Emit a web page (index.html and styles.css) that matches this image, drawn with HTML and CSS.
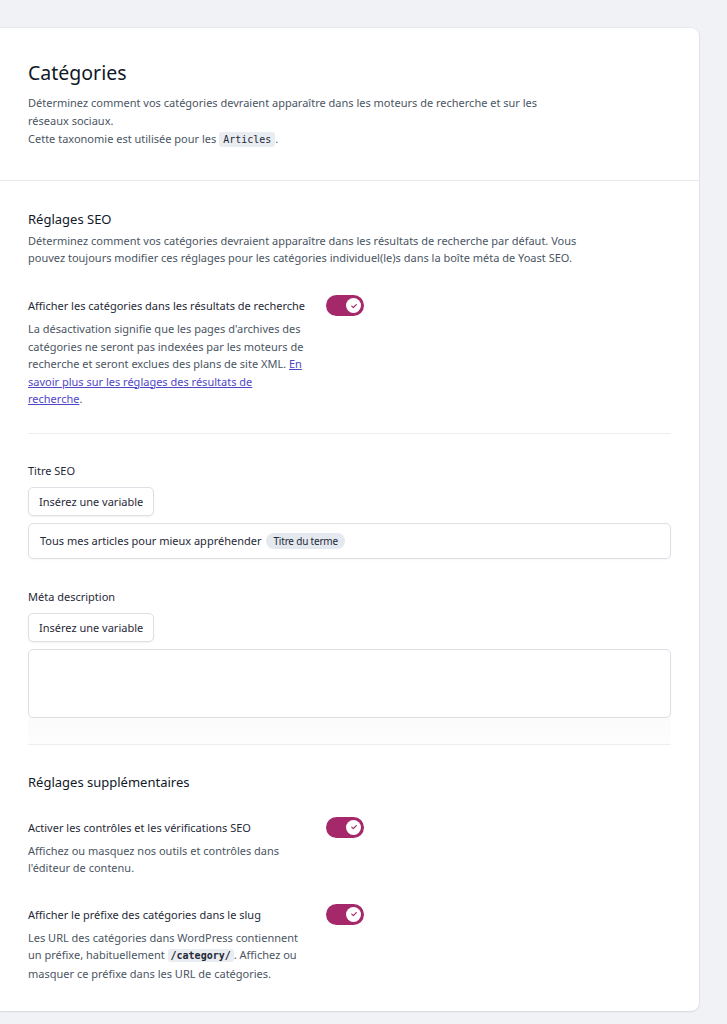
FILE: index.html
```html
<!DOCTYPE html>
<html lang="fr">
<head>
<meta charset="utf-8">
<title>Catégories</title>
<link rel="stylesheet" href="styles.css">
</head>
<body>
<main class="card">
  <header class="card-header">
    <h1 class="page-title">Catégories</h1>
    <p class="page-desc">Déterminez comment vos catégories devraient apparaître dans les moteurs de recherche et sur les réseaux sociaux.<br>Cette taxonomie est utilisée pour les <code class="code">Articles</code>.</p>
  </header>

  <section class="card-body">
    <h2 class="section-title">Réglages SEO</h2>
    <p class="section-desc">Déterminez comment vos catégories devraient apparaître dans les résultats de recherche par défaut. Vous pouvez toujours modifier ces réglages pour les catégories individuel(le)s dans la boîte méta de Yoast SEO.</p>

    <div class="toggle-field toggle-first">
      <div class="toggle-text">
        <div class="field-label">Afficher les catégories dans les résultats de recherche</div>
        <p class="field-desc">La désactivation signifie que les pages d'archives des catégories ne seront pas indexées par les moteurs de recherche et seront exclues des plans de site XML. <a class="link" href="#">En savoir plus sur les réglages des résultats de recherche</a>.</p>
      </div>
      <span class="toggle"><span class="knob"><svg viewBox="0 0 10 10" width="8" height="8"><path d="M2.2 5.2 L4.2 7 L7.8 3.2" fill="none" stroke="#a4286a" stroke-width="1.5" stroke-linecap="round" stroke-linejoin="round"/></svg></span></span>
    </div>

    <hr class="divider divider-a">

    <div class="field-label">Titre SEO</div>
    <button class="var-btn" type="button">Insérez une variable</button>
    <div class="editor editor-single">Tous mes articles pour mieux appréhender <span class="mention">Titre du terme</span></div>

    <div class="field-label label-meta">Méta description</div>
    <button class="var-btn" type="button">Insérez une variable</button>
    <div class="editor editor-multi"></div>
    <div class="editor-shade"></div>

    <hr class="divider divider-b">

    <h2 class="section-title">Réglages supplémentaires</h2>

    <div class="toggle-field toggle-second">
      <div class="toggle-text">
        <div class="field-label">Activer les contrôles et les vérifications SEO</div>
        <p class="field-desc">Affichez ou masquez nos outils et contrôles dans l'éditeur de contenu.</p>
      </div>
      <span class="toggle"><span class="knob"><svg viewBox="0 0 10 10" width="8" height="8"><path d="M2.2 5.2 L4.2 7 L7.8 3.2" fill="none" stroke="#a4286a" stroke-width="1.5" stroke-linecap="round" stroke-linejoin="round"/></svg></span></span>
    </div>

    <div class="toggle-field toggle-third">
      <div class="toggle-text">
        <div class="field-label">Afficher le préfixe des catégories dans le slug</div>
        <p class="field-desc">Les URL des catégories dans WordPress contiennent un préfixe, habituellement <code class="code code-bold">/category/</code>. Affichez ou masquer ce préfixe dans les URL de catégories.</p>
      </div>
      <span class="toggle"><span class="knob"><svg viewBox="0 0 10 10" width="8" height="8"><path d="M2.2 5.2 L4.2 7 L7.8 3.2" fill="none" stroke="#a4286a" stroke-width="1.5" stroke-linecap="round" stroke-linejoin="round"/></svg></span></span>
    </div>
  </section>
</main>
</body>
</html>
```

FILE: styles.css
```css
* { box-sizing: border-box; }
html, body {
  margin: 0;
  padding: 0;
  background: #f0f2f6;
}
body {
  font-family: "Noto Sans", "Open Sans", sans-serif;
  color: #1f2937;
  padding-top: 28px;
  padding-bottom: 12px;
}
.card {
  width: 699px;
  background: #ffffff;
  border-radius: 0 8px 8px 0;
  box-shadow: 0 1px 2px rgba(15, 23, 42, 0.08), 0 0 0 1px rgba(15, 23, 42, 0.04);
}
.card-header {
  padding: 31px 28px 31px;
  border-bottom: 1px solid #e8eaee;
}
.page-title {
  margin: 0;
  font-size: 19.5px;
  line-height: 28px;
  font-weight: 400;
  color: #111827;
}
.page-desc {
  margin: 7px 0 0;
  max-width: 540px;
  font-size: 11px;
  line-height: 18px;
  color: #4b5563;
}
.code {
  font-family: "DejaVu Sans Mono", "Liberation Mono", monospace;
  font-size: 10px;
  background: #e9ecf1;
  color: #1f2937;
  padding: 2px 4px;
  border-radius: 3px;
}
.code-bold { font-weight: 600; padding: 1px 3px; }
.card-body {
  padding: 28px 28px 29px;
}
.section-title {
  margin: 0;
  font-size: 13px;
  line-height: 20px;
  font-weight: 400;
  color: #111827;
}
.section-desc {
  margin: 4px 0 0;
  max-width: 560px;
  font-size: 11px;
  line-height: 16.5px;
  color: #4b5563;
}
.toggle-field {
  display: flex;
  align-items: flex-start;
  gap: 20px;
}
.toggle-first { margin-top: 31px; }
.toggle-second { margin-top: 27px; }
.toggle-third { margin-top: 29px; }
.toggle-text { width: 278px; }
.field-label {
  font-size: 11px;
  line-height: 17.5px;
  color: #1f2937;
  white-space: nowrap;
}
.field-desc {
  margin: 5.5px 0 0;
  font-size: 11px;
  line-height: 17.5px;
  color: #4b5563;
}
.link { color: #4f46c8; text-decoration: underline; }
.toggle {
  flex: none;
  margin-top: -2px;
  width: 38px;
  height: 21px;
  border-radius: 11px;
  background: #a4286a;
  display: flex;
  align-items: center;
  justify-content: flex-end;
  padding-right: 3px;
}
.knob {
  width: 15px;
  height: 15px;
  border-radius: 50%;
  background: #ffffff;
  display: flex;
  align-items: center;
  justify-content: center;
}
.divider {
  border: 0;
  border-top: 1px solid #eceef1;
  margin: 0;
}
.divider-a { margin-top: 25px; margin-bottom: 28px; }
.divider-b { margin-top: 0; margin-bottom: 27px; }
.var-btn {
  display: block;
  margin-top: 7.5px;
  height: 29px;
  padding: 0 10px;
  font-family: inherit;
  font-size: 11px;
  color: #1f2937;
  white-space: nowrap;
  background: #ffffff;
  border: 1px solid #dcdfe4;
  border-radius: 5px;
  box-shadow: 0 1px 2px rgba(0, 0, 0, 0.05);
}
.editor {
  margin-top: 7px;
  width: 100%;
  border: 1px solid #dcdfe4;
  border-radius: 5px;
  box-shadow: 0 1px 2px rgba(0, 0, 0, 0.04);
  font-size: 11px;
  color: #1f2937;
}
.editor-single {
  height: 36px;
  padding: 0 11px;
  display: flex;
  align-items: center;
  gap: 5px;
}
.mention {
  font-size: 10px;
  line-height: 16px;
  padding: 0 7px;
  border-radius: 8px;
  background: #e4e8ef;
  color: #1f2937;
  letter-spacing: -0.2px;
}
.label-meta { margin-top: 29px; }
.editor-multi { height: 69px; }
.editor-shade {
  height: 26px;
  background: linear-gradient(#fbfbfc, #fdfdfd);
}
```
